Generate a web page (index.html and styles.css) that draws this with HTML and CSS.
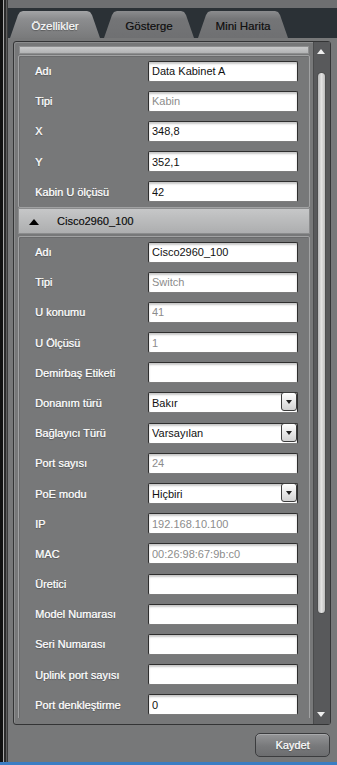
FILE: index.html
```html
<!DOCTYPE html>
<html lang="tr">
<head>
    <meta charset="UTF-8">
    <meta name="viewport" content="width=device-width, initial-scale=1.0">
    <title>Özellikler</title>
    <link rel="stylesheet" href="styles.css">
</head>
<body>
    <div class="window">
        <div class="frame">
            <div class="edge"></div>
            <div class="main">
                <div class="topstrip"></div>
                <div class="tabbar">
                    <div class="tab active">Özellikler</div>
                    <div class="tab">Gösterge</div>
                    <div class="tab">Mini Harita</div>
                </div>
                <div class="content">
                    <div class="panel">
                        <div class="viewport">
                            <div class="stub"></div>

                            <div class="group">
                                <div class="row"><span class="label">Adı</span><input class="field" type="text" value="Data Kabinet A"></div>
                                <div class="row"><span class="label">Tipi</span><input class="field" type="text" value="Kabin" readonly></div>
                                <div class="row"><span class="label">X</span><input class="field" type="text" value="348,8"></div>
                                <div class="row"><span class="label">Y</span><input class="field" type="text" value="352,1"></div>
                                <div class="row"><span class="label">Kabin U ölçüsü</span><input class="field" type="text" value="42"></div>
                            </div>

                            <div class="group-head"><span class="arrow"></span>Cisco2960_100</div>

                            <div class="group tall">
                                <div class="row"><span class="label">Adı</span><input class="field" type="text" value="Cisco2960_100"></div>
                                <div class="row"><span class="label">Tipi</span><input class="field" type="text" value="Switch" readonly></div>
                                <div class="row"><span class="label">U konumu</span><input class="field" type="text" value="41" readonly></div>
                                <div class="row"><span class="label">U Ölçüsü</span><input class="field" type="text" value="1" readonly></div>
                                <div class="row"><span class="label">Demirbaş Etiketi</span><input class="field" type="text" value=""></div>
                                <div class="row"><span class="label">Donanım türü</span><div class="field select">Bakır<span class="drop"></span></div></div>
                                <div class="row"><span class="label">Bağlayıcı Türü</span><div class="field select">Varsayılan<span class="drop"></span></div></div>
                                <div class="row"><span class="label">Port sayısı</span><input class="field" type="text" value="24" readonly></div>
                                <div class="row"><span class="label">PoE modu</span><div class="field select">Hiçbiri<span class="drop"></span></div></div>
                                <div class="row"><span class="label">IP</span><input class="field" type="text" value="192.168.10.100" readonly></div>
                                <div class="row"><span class="label">MAC</span><input class="field" type="text" value="00:26:98:67:9b:c0" readonly></div>
                                <div class="row"><span class="label">Üretici</span><input class="field" type="text" value=""></div>
                                <div class="row"><span class="label">Model Numarası</span><input class="field" type="text" value=""></div>
                                <div class="row"><span class="label">Seri Numarası</span><input class="field" type="text" value=""></div>
                                <div class="row"><span class="label">Uplink port sayısı</span><input class="field" type="text" value=""></div>
                                <div class="row"><span class="label">Port denkleştirme</span><input class="field" type="text" value="0"></div>
                            </div>
                        </div>
                        <div class="scrollbar">
                            <span class="sb-up"></span>
                            <div class="sb-track"><div class="sb-thumb"></div></div>
                            <span class="sb-down"></span>
                        </div>
                    </div>
                    <div class="actions">
                        <button type="button" class="save">Kaydet</button>
                    </div>
                </div>
            </div>
        </div>
        <div class="statusline"></div>
    </div>
</body>
</html>
```

FILE: styles.css
```css
body {
    margin: 0;
    padding: 0;
    background-color: #777879;
    font-family: "Liberation Sans", Arial, sans-serif;
    font-size: 11px;
    overflow: hidden;
}

.window {
    width: 337px;
    height: 765px;
    display: flex;
    flex-direction: column;
}

.frame {
    flex: 1;
    display: flex;
    min-height: 0;
}

.edge {
    width: 8px;
    background: linear-gradient(to right, #111 0 3px, #a8a8a8 3px 4px, #2b2b2b 4px 6px, #5e5e5e 6px 7px, #3a3a3a 7px 8px);
}

.main {
    flex: 1;
    display: flex;
    flex-direction: column;
    min-width: 0;
}

.topstrip {
    height: 8px;
    background-color: #6e6f71;
}

/* tabs */
.tabbar {
    height: 30px;
    background-color: #2b3136;
    display: flex;
    align-items: flex-end;
    gap: 4px;
    padding-left: 2px;
}

.tab {
    width: 90px;
    height: 27px;
    display: flex;
    align-items: center;
    justify-content: center;
    padding-top: 3px;
    box-sizing: border-box;
    color: #101010;
    font-size: 11.5px;
    text-shadow: 0.3px 0 0 rgba(0, 0, 0, 0.4);
    background: linear-gradient(#8b8c8e, #747577 30%, #6f7072);
    clip-path: polygon(0 100%, 8px 4px, 10px 1px, 13px 0, calc(100% - 13px) 0, calc(100% - 10px) 1px, calc(100% - 8px) 4px, 100% 100%);
}

.tab.active {
    color: #f7f7f7;
    background: linear-gradient(#a3a4a6, #8c8d8f 30%, #797a7b);
    text-shadow: 0.3px 0 0 rgba(255, 255, 255, 0.6), 0 1px 1px rgba(0, 0, 0, 0.35);
}

/* panel */
.content {
    flex: 1;
    display: flex;
    flex-direction: column;
    min-height: 0;
}

.panel {
    margin: 3px 0 0 5px;
    width: 318px;
    height: 684px;
    box-sizing: border-box;
    border: 1px solid #333435;
    border-radius: 3px;
    display: flex;
    box-shadow: inset 1px 1px 0 #8c8d8e;
}

.viewport {
    width: 292px;
    margin: 4px 0 6px 4px;
    overflow: hidden;
}

.stub {
    height: 6px;
    margin: 0 1px 1px;
    background: linear-gradient(#c9cacb, #b2b3b4);
    border: 1px solid #8d8e8f;
}

.group {
    border: 1px solid #a1a2a3;
    border-radius: 2px;
    box-shadow: inset 1px 1px 0 #6a6b6c;
}

.group.tall {
    padding-bottom: 30px;
}

.row {
    height: 30.2px;
    display: flex;
    align-items: center;
}

.label {
    width: 113px;
    padding-left: 16px;
    color: #fafafa;
    text-shadow: 0.4px 0 0 rgba(255, 255, 255, 0.7), 0 1px 1px rgba(0, 0, 0, 0.3);
    white-space: nowrap;
}

.field {
    width: 150px;
    height: 21px;
    box-sizing: border-box;
    border: 1px solid #2e2e2e;
    border-bottom-color: #7d7d7d;
    border-radius: 2px;
    background-color: #fff;
    box-shadow: inset 0 2px 2px rgba(0, 0, 0, 0.22);
    padding: 0 3px;
    margin: 0;
    font-family: "Liberation Sans", Arial, sans-serif;
    font-size: 11px;
    color: #111;
    outline: none;
}

.field[readonly] {
    color: #8c8c8c;
}

.select {
    display: flex;
    align-items: center;
    position: relative;
}

.drop {
    position: absolute;
    right: 0;
    top: -1px;
    width: 16px;
    height: 19px;
    box-sizing: border-box;
    border: 1px solid #3c3c3c;
    border-radius: 3px;
    background: linear-gradient(#ffffff, #d2d2d2);
}

.drop::after {
    content: "";
    position: absolute;
    left: 4px;
    top: 7px;
    border-left: 3px solid transparent;
    border-right: 3px solid transparent;
    border-top: 4px solid #222;
}

.group-head {
    height: 26px;
    box-sizing: border-box;
    margin-bottom: 2px;
    border: 1px solid #8b8c8d;
    background: linear-gradient(#c6c7c8, #adaeaf);
    display: flex;
    align-items: center;
    color: #111;
    text-shadow: 0.3px 0 0 rgba(0, 0, 0, 0.4);
    padding-left: 10px;
}

.arrow {
    width: 0;
    height: 0;
    border-left: 5px solid transparent;
    border-right: 5px solid transparent;
    border-bottom: 6px solid #000;
    margin-right: 18px;
    margin-top: 2px;
}

/* scrollbar */
.scrollbar {
    width: 17px;
    margin-left: 3px;
    background-color: #58595b;
    box-shadow: inset 1px 0 0 #4a4b4c;
    display: flex;
    flex-direction: column;
    align-items: center;
}

.sb-up, .sb-down {
    height: 20px;
    width: 17px;
    position: relative;
    flex: none;
}

.sb-up::after, .sb-down::after {
    content: "";
    position: absolute;
    left: 4px;
    border-left: 4px solid transparent;
    border-right: 4px solid transparent;
}

.sb-up::after {
    top: 7px;
    border-bottom: 5px solid #eee;
}

.sb-down::after {
    top: 8px;
    border-top: 5px solid #eee;
}

.sb-track {
    flex: 1;
    width: 17px;
    display: flex;
    justify-content: center;
}

.sb-thumb {
    width: 7px;
    height: 540px;
    margin-top: 11px;
    border-radius: 4px;
    background: linear-gradient(to right, #b9b9b9, #e2e2e2 50%, #bdbdbd);
    box-shadow: 0 0 0 1px #4d4e4f;
}

/* footer button */
.actions {
    flex: 1;
    display: flex;
    justify-content: flex-end;
    align-items: flex-start;
    padding: 8px 7px 0 0;
}

.save {
    width: 75px;
    height: 24px;
    border: 1px solid #3b3c3e;
    border-radius: 5px;
    background: linear-gradient(#949597, #78797b 55%, #6c6d6f);
    box-shadow: inset 0 1px 0 #a9aaac;
    color: #f7f7f7;
    font-family: "Liberation Sans", Arial, sans-serif;
    font-size: 11px;
    text-shadow: 0.4px 0 0 rgba(255, 255, 255, 0.7), 0 1px 1px rgba(0, 0, 0, 0.3);
    cursor: pointer;
}

.statusline {
    height: 3px;
    background-color: #3b7dc3;
}
```
